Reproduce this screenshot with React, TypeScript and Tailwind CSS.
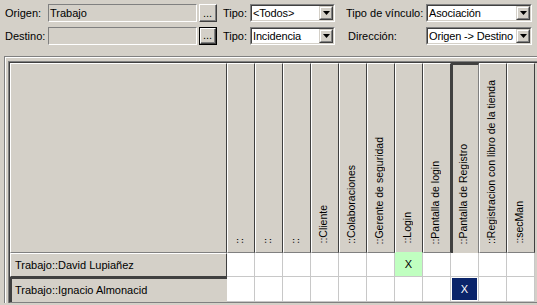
import React from "react";

function Arrow() {
  return (
    <svg width="7" height="4" viewBox="0 0 7 4" className="block">
      <path d="M0 0h7L3.5 4z" fill="#000" />
    </svg>
  );
}

function Select({ className, text }: { className: string; text: string }) {
  return (
    <div
      className={`${className} h-[18px] flex border border-t-[#808080] border-l-[#808080] border-b-white border-r-white`}
    >
      <div className="flex-1 flex border border-t-[#404040] border-l-[#404040] border-b-[#d4d0c8] border-r-[#d4d0c8] bg-white overflow-hidden">
        <span className="flex-1 pl-[1px] leading-[14px] whitespace-nowrap overflow-hidden tracking-[-0.15px]">{text}</span>
        <div className="w-[14px] h-full flex border border-t-[#d4d0c8] border-l-[#d4d0c8] border-b-[#404040] border-r-[#404040] bg-[#d4d0c8]">
          <div className="flex-1 flex items-center justify-center border border-t-white border-l-white border-b-[#808080] border-r-[#808080]">
            <Arrow />
          </div>
        </div>
      </div>
    </div>
  );
}

function TextBox({ text }: { text: string }) {
  return (
    <div className="w-[149px] h-[18px] flex items-center border border-t-[#808080] border-l-[#808080] border-b-white border-r-white bg-[#d4d0c8]">
      <span className="pl-[1px] leading-[14px]">{text}</span>
    </div>
  );
}

function DotsButton({ focused }: { focused?: boolean }) {
  const inner = (
    <div className="flex-1 flex border border-t-white border-l-white border-b-[#404040] border-r-[#404040] bg-[#d4d0c8]">
      <div className="flex-1 flex items-end justify-center border-b border-r border-b-[#808080] border-r-[#808080] leading-[12px] pb-[1px]">
        ...
      </div>
    </div>
  );
  return (
    <div className={`ml-[2px] w-[18px] h-[18px] flex ${focused ? "border border-black" : ""}`}>{inner}</div>
  );
}

const cols = [
  "::",
  "::",
  "::",
  "::Cliente",
  "::Colaboraciones",
  "::Gerente de seguridad",
  "::Login",
  "::Pantalla de login",
  "::Pantalla de Registro",
  "::Registracion con libro de la tienda",
  "::secMan",
];

function HeaderCell({ text, idx }: { text: string; idx: number }) {
  const selected = idx === 8;
  const login = idx === 6;
  const base = selected
    ? "border-t-2 border-l-2 border-t-[#404040] border-l-[#404040] border-r border-r-[#808080] pl-[4px] pb-[9px]"
    : `border-t border-l border-r border-b border-t-white border-l-white border-r-[#404040] ${
        login ? "border-b-[#c0ffc0]" : "border-b-[#808080]"
      } pl-[5px] pb-[8px]`;
  return (
    <div className={`${base} bg-[#d4d0c8] flex items-end overflow-hidden`}>
      <span className="[writing-mode:vertical-rl] rotate-180 leading-[13px] whitespace-nowrap text-[10.5px]">{text}</span>
    </div>
  );
}

function DataCell({ kind }: { kind?: "green" | "navy" }) {
  if (kind === "green") {
    return (
      <div className="bg-[#c0ffc0] border-r border-b border-r-[#c8c8c8] border-b-[#c8c8c8] flex items-center justify-center">
        X
      </div>
    );
  }
  if (kind === "navy") {
    return (
      <div className="bg-white border-r border-b border-r-[#c8c8c8] border-b-[#c8c8c8] flex p-[1px]">
        <div className="flex-1 bg-[#0a246a] text-white flex items-center justify-center">X</div>
      </div>
    );
  }
  return <div className="bg-white border-r border-b border-r-[#c8c8c8] border-b-[#c8c8c8]" />;
}

export default function App() {
  return (
    <div className="w-[537px] h-[305px] overflow-hidden bg-[#d4d0c8] text-black text-[11px] font-['Liberation_Sans',Arial,sans-serif] flex flex-col">
      <div className="flex items-center h-[18px] mt-[4px] shrink-0">
        <span className="ml-[5px] w-[43px]">Origen:</span>
        <TextBox text="Trabajo" />
        <DotsButton />
        <span className="ml-[6px] w-[27px]">Tipo:</span>
        <Select className="w-[85px]" text="<Todos>" />
        <span className="ml-[11px] w-[80px] whitespace-nowrap">Tipo de vínculo:</span>
        <Select className="w-[106px]" text="Asociación" />
      </div>
      <div className="flex items-center h-[18px] mt-[5px] shrink-0">
        <span className="ml-[5px] w-[43px]">Destino:</span>
        <TextBox text="" />
        <DotsButton focused />
        <span className="ml-[6px] w-[27px]">Tipo:</span>
        <Select className="w-[85px]" text="Incidencia" />
        <span className="ml-[13px] w-[78px] whitespace-nowrap">Dirección:</span>
        <Select className="w-[106px]" text="Origen -> Destino" />
      </div>
      <div className="mt-[11px] ml-[4px] w-[545px] shrink-0 border-t border-l border-t-[#808080] border-l-[#808080]">
        <div className="border-t border-l border-white pl-[2px] pt-[3px]">
          <div className="w-[540px] border-t border-l border-t-[#808080] border-l-[#808080]">
            <div className="border-t border-l border-t-[#404040] border-l-[#404040] border-b border-b-[#808080]">
              <div className="grid grid-cols-[217px_repeat(11,28px)] grid-rows-[190px_24px_25px]">
                <div className="bg-[#d4d0c8] border-t border-l border-r border-b border-t-white border-l-white border-r-[#404040] border-b-[#808080]" />
                {cols.map((c, i) => (
                  <HeaderCell key={i} text={c} idx={i} />
                ))}
                <div className="bg-[#d4d0c8] border-t border-l border-r border-b border-t-white border-l-white border-r-[#404040] border-b-[#404040] pl-[4px] flex items-center whitespace-nowrap">
                  Trabajo::David Lupiañez
                </div>
                {cols.map((_, i) => (
                  <DataCell key={i} kind={i === 6 ? "green" : undefined} />
                ))}
                <div className="bg-[#d4d0c8] border-t-2 border-l-2 border-t-[#404040] border-l-[#404040] pl-[3px] flex items-center whitespace-nowrap">
                  Trabajo::Ignacio Almonacid
                </div>
                {cols.map((_, i) => (
                  <DataCell key={i} kind={i === 8 ? "navy" : undefined} />
                ))}
              </div>
            </div>
          </div>
        </div>
      </div>
    </div>
  );
}
